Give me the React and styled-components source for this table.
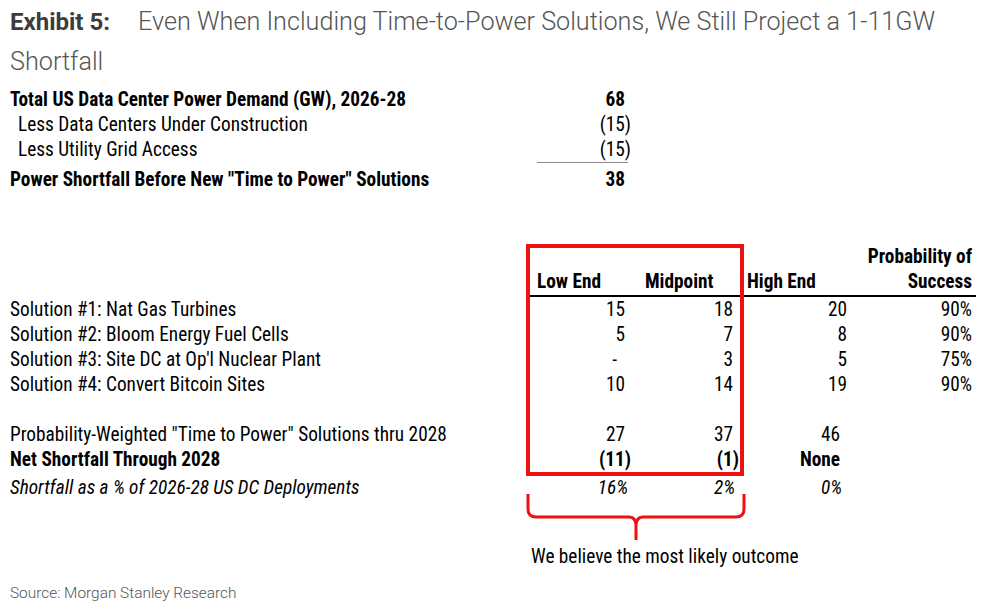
import React from "react";
import styled, { createGlobalStyle } from "styled-components";

const GlobalStyle = createGlobalStyle`
  html, body {
    margin: 0;
    padding: 0;
    background: #fff;
  }
`;

const RED = "#ee1111";
const COND = `"Roboto Condensed", "Liberation Sans Narrow", "Arial Narrow", Roboto, sans-serif`;

const Page = styled.div`
  width: 1000px;
  height: 616px;
  box-sizing: border-box;
  padding: 2px 10px 0;
  font-family: ${COND};
  font-stretch: condensed;
  font-size: 19.3px;
  color: #000;
  display: flex;
  flex-direction: column;
`;

const TitleLine = styled.div`
  display: flex;
  font-family: Roboto, "Liberation Sans", sans-serif;
  font-stretch: normal;
  font-size: 25.2px;
  line-height: 40px;
  color: #555;
  font-weight: 300;
  white-space: nowrap;
`;

const ExhibitTag = styled.span`
  width: 128px;
  flex: none;
  font-size: 24px;
  font-weight: 700;
  color: #3c3c3c;
`;

const Row = styled.div`
  display: grid;
  grid-template-columns: ${(p) => p.$cols};
  line-height: ${(p) => p.$h || 25}px;
  margin-top: ${(p) => p.$gap || 0}px;
  font-weight: ${(p) => (p.$bold ? 700 : 400)};
  font-style: ${(p) => (p.$italic ? "italic" : "normal")};
`;

const Label = styled.div`
  white-space: nowrap;
  padding-left: ${(p) => (p.$indent ? 8 : 0)}px;
`;

const Num = styled.div`
  text-align: right;
  white-space: nowrap;
  padding-right: ${(p) => p.$pad}px;
  margin-right: ${(p) => (p.$neg ? -6 : 0)}px;
  border-bottom: ${(p) => (p.$rule ? "1.5px solid #8a8a8a" : "none")};
`;

const Summary = styled.div`
  margin-top: 5px;
`;

const Solutions = styled.div`
  position: relative;
  margin-top: 52px;
`;

const HeadRow = styled.div`
  display: grid;
  grid-template-columns: 517px 449px;
`;

const HeadCells = styled.div`
  display: grid;
  grid-template-columns: 108px 109px 111px 121px;
  align-items: end;
  border-bottom: 2px solid #000;
  padding-bottom: 1px;
  font-weight: 700;
  line-height: 25px;
`;

const Head = styled.div`
  white-space: nowrap;
  padding-left: ${(p) => p.$left || 0}px;
  padding-right: ${(p) => p.$right || 0}px;
  text-align: ${(p) => (p.$right ? "right" : "left")};
`;

const Spacer = styled.div`
  height: 25px;
`;

const HighlightBox = styled.div`
  position: absolute;
  left: 516px;
  top: 0;
  width: 218px;
  height: 232px;
  box-sizing: border-box;
  border: 4px solid ${RED};
  pointer-events: none;
`;

const Brace = styled.svg`
  display: block;
  margin: -5px 0 0 516px;
`;

const Note = styled.div`
  margin: 2px 0 0 521px;
  line-height: 25px;
`;

const Source = styled.div`
  margin-top: 14px;
  font-family: Roboto, "Liberation Sans", sans-serif;
  font-stretch: normal;
  font-weight: 300;
  font-size: 15.4px;
  line-height: 20px;
  color: #555;
`;

const TOP_COLS = "527px 91px";
const SOL_COLS = "517px 108px 109px 111px 121px";

const solutions = [
  ["Solution #1: Nat Gas Turbines", "15", "18", "20", "90%"],
  ["Solution #2: Bloom Energy Fuel Cells", "5", "7", "8", "90%"],
  ["Solution #3: Site DC at Op'l Nuclear Plant", "-", "3", "5", "75%"],
  ["Solution #4: Convert Bitcoin Sites", "10", "14", "19", "90%"],
];

export default function App() {
  return (
    <Page>
      <GlobalStyle />
      <TitleLine>
        <ExhibitTag>Exhibit 5:</ExhibitTag>
        <span>Even When Including Time-to-Power Solutions, We Still Project a 1-11GW</span>
      </TitleLine>
      <TitleLine>Shortfall</TitleLine>

      <Summary>
        <Row $cols={TOP_COLS} $bold>
          <Label>Total US Data Center Power Demand (GW), 2026-28</Label>
          <Num $pad={3}>68</Num>
        </Row>
        <Row $cols={TOP_COLS}>
          <Label $indent>Less Data Centers Under Construction</Label>
          <Num $pad={3} $neg>(15)</Num>
        </Row>
        <Row $cols={TOP_COLS}>
          <Label $indent>Less Utility Grid Access</Label>
          <Num $pad={0} $rule>
            <span style={{ marginRight: -3 }}>(15)</span>
          </Num>
        </Row>
        <Row $cols={TOP_COLS} $bold $gap={4}>
          <Label>Power Shortfall Before New "Time to Power" Solutions</Label>
          <Num $pad={3}>38</Num>
        </Row>
      </Summary>

      <Solutions>
        <HeadRow>
          <div />
          <HeadCells>
            <Head $left={10}>Low End</Head>
            <Head $left={10}>Midpoint</Head>
            <Head $left={3}>High End</Head>
            <Head $right={4}>
              Probability of
              <br />
              Success
            </Head>
          </HeadCells>
        </HeadRow>

        {solutions.map(([label, low, mid, high, prob]) => (
          <Row $cols={SOL_COLS} key={label}>
            <Label>{label}</Label>
            <Num $pad={low === "-" ? 18 : 10}>{low}</Num>
            <Num $pad={11}>{mid}</Num>
            <Num $pad={8}>{high}</Num>
            <Num $pad={4}>{prob}</Num>
          </Row>
        ))}
        <Spacer />
        <Row $cols={SOL_COLS}>
          <Label>Probability-Weighted "Time to Power" Solutions thru 2028</Label>
          <Num $pad={10}>27</Num>
          <Num $pad={11}>37</Num>
          <Num $pad={15}>46</Num>
          <div />
        </Row>
        <Row $cols={SOL_COLS} $bold>
          <Label>Net Shortfall Through 2028</Label>
          <Num $pad={10} $neg>(11)</Num>
          <Num $pad={11} $neg>(1)</Num>
          <Num $pad={15}>None</Num>
          <div />
        </Row>
        <Row $cols={SOL_COLS} $italic $h={22} $gap={5}>
          <Label>Shortfall as a % of 2026-28 US DC Deployments</Label>
          <Num $pad={7}>16%</Num>
          <Num $pad={9}>2%</Num>
          <Num $pad={13}>0%</Num>
          <div />
        </Row>

        <HighlightBox />
      </Solutions>

      <Brace width="220" height="48" viewBox="0 0 220 48">
        <path
          d="M2 0 V15 Q2 23 10 23 H103 Q109 23 110 30 V46 M218 0 V15 Q218 23 210 23 H117 Q111 23 110 30"
          fill="none"
          stroke={RED}
          strokeWidth="3"
        />
      </Brace>
      <Note>We believe the most likely outcome</Note>

      <Source>Source: Morgan Stanley Research</Source>
    </Page>
  );
}
